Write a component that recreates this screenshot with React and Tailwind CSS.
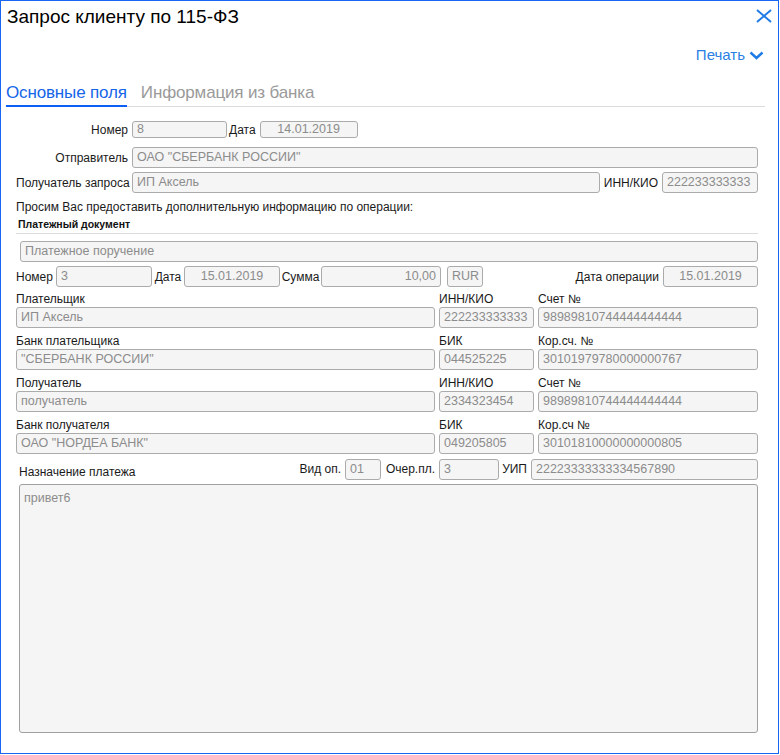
import React from "react";

// read-only field as it appears in the request form
function Field({ value, className = "", center = false, right = false }) {
  return (
    <div
      className={`h-[21px] flex items-center rounded-[3px] border border-[#ababab] bg-[#f5f5f5] px-[4px] text-[12.5px] text-[#8c8c8c] whitespace-nowrap overflow-hidden ${center ? "justify-center" : ""} ${right ? "justify-end" : ""} ${className}`}
    >
      {value}
    </div>
  );
}

function Label({ children, className = "" }) {
  return <div className={`text-[12px] leading-[16px] text-[#1a1a1a] whitespace-nowrap ${className}`}>{children}</div>;
}

const blocks = [
  ["Плательщик", "ИНН/КИО", "Счет №", "ИП Аксель", "222233333333", "98989810744444444444"],
  ["Банк плательщика", "БИК", "Кор.сч. №", "\"СБЕРБАНК РОССИИ\"", "044525225", "30101979780000000767"],
  ["Получатель", "ИНН/КИО", "Счет №", "получатель", "2334323454", "98989810744444444444"],
  ["Банк получателя", "БИК", "Кор.сч №", "ОАО \"НОРДЕА БАНК\"", "049205805", "30101810000000000805"],
];

export default function App() {
  return (
    <div className="w-[779px] h-[754px] border border-[#1766f2] bg-white flex flex-col font-['Liberation_Sans',Arial,sans-serif]">
      {/* header */}
      <div className="flex justify-between items-start pl-[6px] pr-[6px] pt-[4px]">
        <h1 className="text-[19px] leading-[24px] text-black">Запрос клиенту по 115-ФЗ</h1>
        <svg width="16" height="14" viewBox="0 0 16 14" className="mt-[4px]">
          <path d="M1 1 L15 13 M15 1 L1 13" stroke="#1f7be6" strokeWidth="2" fill="none" />
        </svg>
      </div>

      <div className="flex justify-end items-center gap-[4px] pr-[14px] mt-[16px]">
        <span className="text-[15px] leading-[20px] text-[#2b7fe3]">Печать</span>
        <svg width="15" height="9" viewBox="0 0 15 9">
          <path d="M1.5 1.5 L7.5 7 L13.5 1.5" stroke="#1f7be6" strokeWidth="2.4" fill="none" />
        </svg>
      </div>

      {/* tabs */}
      <div className="ml-[5px] w-[759px] mt-[18px] flex gap-[14px] border-b border-[#dcdcdc]">
        <div className="text-[17px] leading-[20px] tracking-[-0.15px] text-[#1565e8] pb-[2px] border-b-2 border-[#0b5ff4] -mb-[1px]">
          Основные поля
        </div>
        <div className="text-[17px] leading-[20px] tracking-[-0.15px] text-[#9a9a9a]">Информация из банка</div>
      </div>

      {/* form */}
      <div className="pl-[15px] pr-[20px] mt-[14px] flex flex-col">
        <div className="flex items-center h-[17px]">
          <Label className="w-[112px] text-right">Номер</Label>
          <Field value="8" className="ml-[4px] w-[95px] !h-[17px]" />
          <Label className="ml-[2px]">Дата</Label>
          <Field value="14.01.2019" center className="ml-[4px] w-[98px] !h-[17px]" />
        </div>

        <div className="flex items-center mt-[9px]">
          <Label className="w-[112px] text-right">Отправитель</Label>
          <Field value="ОАО &quot;СБЕРБАНК РОССИИ&quot;" className="ml-[4px] flex-1" />
        </div>

        <div className="flex items-center mt-[4px]">
          <Label className="w-[112px] text-right">Получатель запроса</Label>
          <Field value="ИП Аксель" className="ml-[4px] flex-1" />
          <Label className="ml-[4px]">ИНН/КИО</Label>
          <Field value="222233333333" className="ml-[4px] w-[96px]" />
        </div>

        <Label className="mt-[6px]">Просим Вас предоставить дополнительную информацию по операции:</Label>
        <div className="mt-[2px] pl-[2px] pb-[2px] border-b border-[#dcdcdc] text-[10.5px] leading-[14px] font-bold text-[#111]">
          Платежный документ
        </div>

        <Field value="Платежное поручение" className="mt-[7px] ml-[4px]" />

        <div className="flex items-center mt-[4px]">
          <Label className="w-[40px]">Номер</Label>
          <Field value="3" className="w-[96px]" />
          <Label className="w-[32px] text-center">Дата</Label>
          <Field value="15.01.2019" center className="w-[96px]" />
          <Label className="w-[41px] text-center">Сумма</Label>
          <Field value="10,00" right className="w-[120px]" />
          <Field value="RUR" className="ml-[6px] w-[36px]" />
          <div className="flex-1" />
          <Label>Дата операции</Label>
          <Field value="15.01.2019" center className="ml-[4px] w-[95px]" />
        </div>

        <div className="mt-[4px] flex flex-col gap-[5px]">
          {blocks.map((b) => (
            <div key={b[0]} className="grid grid-cols-[419px_95px_1fr] gap-x-[4px]">
              <Label>{b[0]}</Label>
              <Label>{b[1]}</Label>
              <Label>{b[2]}</Label>
              <Field value={b[3]} />
              <Field value={b[4]} />
              <Field value={b[5]} />
            </div>
          ))}
        </div>

        <div className="flex items-center mt-[4px]">
          <Label className="flex-1 pl-[3px] pt-[6px]">Назначение платежа</Label>
          <Label className="w-[45px] text-right">Вид оп.</Label>
          <Field value="01" className="ml-[4px] w-[36px]" />
          <Label className="w-[54px] text-right">Очер.пл.</Label>
          <Field value="3" className="ml-[4px] w-[60px]" />
          <Label className="w-[28px] text-right">УИП</Label>
          <Field value="22223333333334567890" className="ml-[4px] w-[227px]" />
        </div>

        <div className="mt-[4px] ml-[3px] h-[249px] rounded-[3px] border border-[#a0a0a0] bg-[#f5f5f5] px-[4px] pt-[5px] text-[12.5px] leading-[16px] text-[#8c8c8c]">
          привет6
        </div>
      </div>
    </div>
  );
}
